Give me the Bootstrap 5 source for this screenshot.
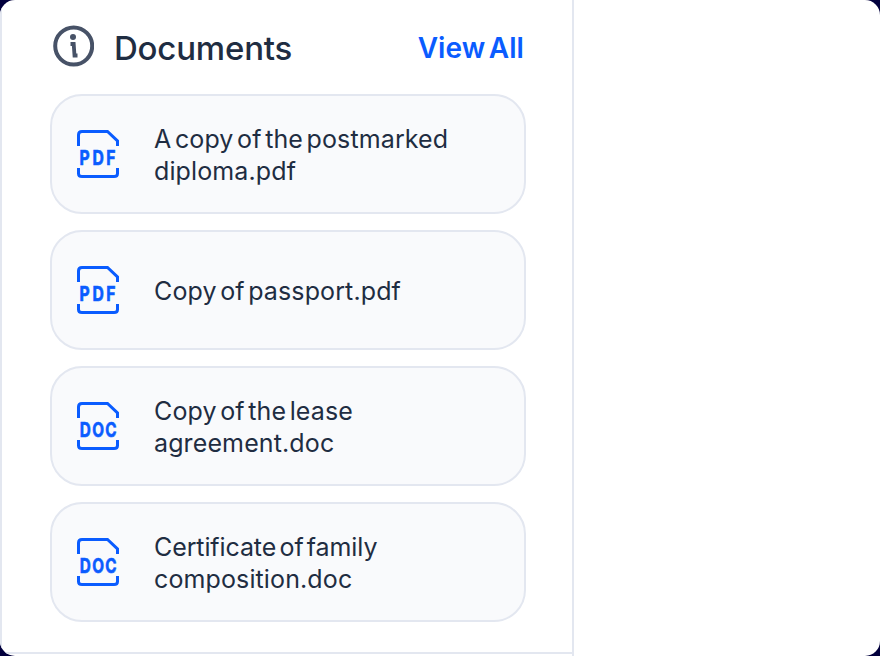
<!DOCTYPE html>
<html lang="en">
<head>
<meta charset="utf-8">
<meta name="viewport" content="width=device-width, initial-scale=1">
<title>Documents</title>
<link href="https://cdn.jsdelivr.net/npm/bootstrap@5.3.0/dist/css/bootstrap.min.css" rel="stylesheet">
<style>
body{background:#02003d;font-family:Inter,"Open Sans",sans-serif;color:#1f2d42}
.screen{width:880px;height:656px;border-radius:15px}
.side{width:574px;border-left:2px solid #e3e7f0;border-right:2px solid #e3e7f0}
.docs{height:654px;border-bottom:2px solid #e3e7f0;padding:24px 46px 0 48px}
.head{height:44px;margin-bottom:26px}
.title{font-size:33px;font-weight:500;line-height:44px;margin-left:20px;letter-spacing:-.2px;padding-top:3px}
.all{font-size:28px;font-weight:600;color:#0a5cff;line-height:44px;margin-right:2px;letter-spacing:.05px;word-spacing:-3.500px;padding-top:4px}
.doc{height:120px;border:2px solid #e3e7f0;border-radius:32px;background:#f9fafc;padding-left:24px}
.name{font-size:25px;line-height:32px;margin-left:34px;white-space:nowrap;padding-top:2px;letter-spacing:.12px;word-spacing:-3.6px}
.tight{letter-spacing:-.1px}
.ft{font:700 20.6px Inter,sans-serif;fill:#0a5cff;stroke:#0a5cff;stroke-width:.7px}
</style>
</head>
<body>
<svg class="d-none"><defs><g id="page" fill="none" stroke="#0a5cff" stroke-width="3"><path d="M2.500 18V7Q2.500 3.500 6 3.500H31.500L41.500 13V18M2.500 40V45.500Q2.500 48.500 6 48.500H38Q41.500 48.500 41.500 45.500V40"/></g></defs></svg>
<main class="screen bg-white overflow-hidden">
<section class="side h-100">
<div class="docs">
<header class="head d-flex align-items-center">
<svg width="44" height="44" viewBox="0 0 44 44" fill="none" stroke="#475267"><circle cx="23.700" cy="22" r="18.500" stroke-width="4"/><circle cx="23" cy="13" r="3" fill="#475267" stroke="none"/><path d="M20.500 20h3.200l.8 11.500h3" stroke-width="3.800"/></svg>
<h1 class="title mb-0">Documents</h1>
<a class="all ms-auto text-decoration-none" href="#">View All</a>
</header>
<div class="d-flex flex-column gap-3">
<article class="doc d-flex align-items-center"><svg width="44" height="52" viewBox="0 0 44 52"><use href="#page"/><text class="ft" transform="scale(.76 1)" x="4.500 21.700 39.800" y="37">PDF</text></svg><div class="name">A copy of the postmarked<br>diploma.pdf</div></article>
<article class="doc d-flex align-items-center"><svg width="44" height="52" viewBox="0 0 44 52"><use href="#page"/><text class="ft" transform="scale(.76 1)" x="4.500 21.700 39.800" y="37">PDF</text></svg><div class="name">Copy of passport.pdf</div></article>
<article class="doc d-flex align-items-center"><svg width="44" height="52" viewBox="0 0 44 52"><use href="#page"/><text class="ft" transform="scale(.74 1)" x="5 22 39.500" y="37">DOC</text></svg><div class="name">Copy of the lease<br>agreement.doc</div></article>
<article class="doc d-flex align-items-center"><svg width="44" height="52" viewBox="0 0 44 52"><use href="#page"/><text class="ft" transform="scale(.74 1)" x="5 22 39.500" y="37">DOC</text></svg><div class="name"><span class="tight">Certificate of family</span><br>composition.doc</div></article>
</div>
</div>
</section>
</main>
<script src="https://cdn.jsdelivr.net/npm/bootstrap@5.3.0/dist/js/bootstrap.bundle.min.js"></script>
</body>
</html>
